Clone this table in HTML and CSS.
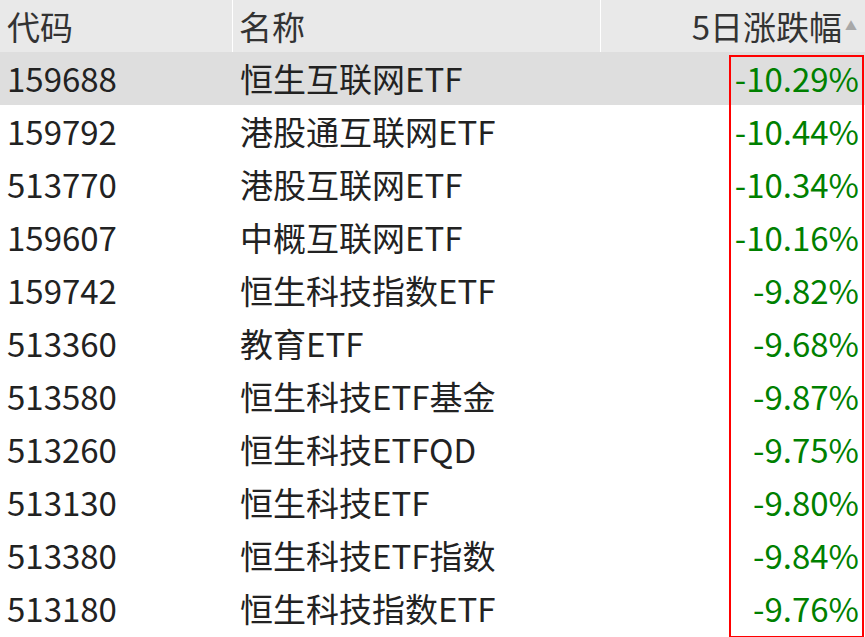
FILE: index.html
```html
<!DOCTYPE html>
<html lang="zh">
<head>
<meta charset="utf-8">
<link rel="stylesheet" href="styles.css">
</head>
<body>
<div class="table">
  <div class="row head">
    <div class="c code">代码</div>
    <div class="c name">名称</div>
    <div class="c pct">5日涨跌幅<span class="sort">▲</span></div>
  </div>
  <div class="row sel"><div class="c code">159688</div><div class="c name">恒生互联网ETF</div><div class="c pct">-10.29%</div></div>
  <div class="row"><div class="c code">159792</div><div class="c name">港股通互联网ETF</div><div class="c pct">-10.44%</div></div>
  <div class="row"><div class="c code">513770</div><div class="c name">港股互联网ETF</div><div class="c pct">-10.34%</div></div>
  <div class="row"><div class="c code">159607</div><div class="c name">中概互联网ETF</div><div class="c pct">-10.16%</div></div>
  <div class="row"><div class="c code">159742</div><div class="c name">恒生科技指数ETF</div><div class="c pct">-9.82%</div></div>
  <div class="row"><div class="c code">513360</div><div class="c name">教育ETF</div><div class="c pct">-9.68%</div></div>
  <div class="row"><div class="c code">513580</div><div class="c name">恒生科技ETF基金</div><div class="c pct">-9.87%</div></div>
  <div class="row"><div class="c code">513260</div><div class="c name">恒生科技ETFQD</div><div class="c pct">-9.75%</div></div>
  <div class="row"><div class="c code">513130</div><div class="c name">恒生科技ETF</div><div class="c pct">-9.80%</div></div>
  <div class="row"><div class="c code">513380</div><div class="c name">恒生科技ETF指数</div><div class="c pct">-9.84%</div></div>
  <div class="row"><div class="c code">513180</div><div class="c name">恒生科技指数ETF</div><div class="c pct">-9.76%</div></div>
  <div class="mark"></div>
</div>
</body>
</html>
```
FILE: styles.css
```css
html, body {
  margin: 0;
  padding: 0;
  background: #fff;
}
.table {
  position: relative;
  width: 865px;
  height: 637px;
  overflow: hidden;
  font-family: "Noto Sans CJK SC", "Noto Sans", sans-serif;
  font-size: 33px;
  color: #222;
}
.row {
  display: grid;
  grid-template-columns: 232px 368px 265px;
  height: 53px;
  align-items: center;
}
.row.head {
  height: 52px;
  background: #e9e9e9;
  color: #333;
}
.row.sel {
  background: #dedede;
}
.c {
  line-height: 53px;
  white-space: nowrap;
}
.code {
  padding-left: 7px;
}
.name {
  padding-left: 8px;
}
.head .name {
  border-left: 1px solid #fff;
  padding-left: 6px;
}
.head .pct {
  border-left: 1px solid #fff;
  color: #333;
}
.head .c {
  line-height: 52px;
}
.pct {
  text-align: right;
  padding-right: 6px;
  color: #008000;
}
.head .pct {
  padding-right: 8px;
}
.sort {
  font-size: 12px;
  color: #a8a8a8;
  vertical-align: 9px;
  margin-left: 3px;
}
.mark {
  position: absolute;
  left: 729px;
  top: 55px;
  width: 131px;
  height: 579px;
  border: 2px solid #f00;
}
```
